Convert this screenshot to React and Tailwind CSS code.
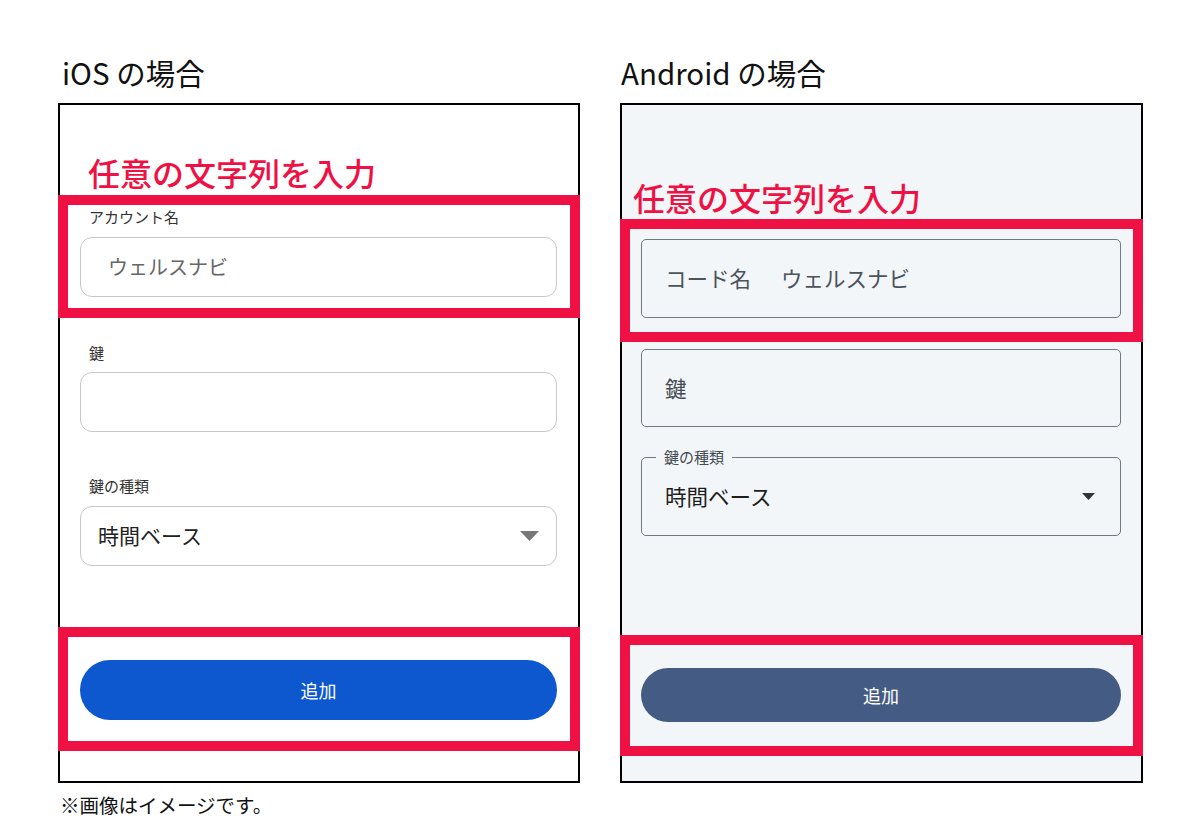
import React from "react";

function Tri({ w, h, color }) {
  return (
    <svg width={w} height={h} viewBox={`0 0 ${w} ${h}`} className="block">
      <polygon points={`0,0 ${w},0 ${w / 2},${h}`} fill={color} />
    </svg>
  );
}

function IOSColumn() {
  return (
    <div className="w-[522px]">
      <div className="h-[40px] leading-[40px] text-[29.5px] pl-[4px] mb-[11px] text-[#111]">iOS の場合</div>
      <div className="h-[680px] border-2 border-black bg-white flex flex-col">
        <div className="pt-[51px] pl-[28px] text-[32px] leading-[32px] font-medium text-[#ef1144]">任意の文字列を入力</div>
        <div className="mt-[7px] -mx-[2px] border-[10px] border-[#ef1144] pt-[3px] pb-[11px] pl-[12px] pr-[13px]">
          <div className="ml-[9px] text-[15px] leading-[18px] text-[#333]">アカウント名</div>
          <div className="mt-[11px] h-[60px] rounded-[12px] border border-[#c8c8c8] flex items-center pl-[27px] text-[20px] text-[#666]">ウェルスナビ</div>
        </div>
        <div className="pl-[20px] pr-[21px] flex flex-col">
          <div className="ml-[9px] mt-[26px] text-[15px] leading-[18px] text-[#333]">鍵</div>
          <div className="mt-[10px] h-[60px] rounded-[12px] border border-[#c8c8c8]"></div>
          <div className="ml-[9px] mt-[45px] text-[15px] leading-[18px] text-[#333]">鍵の種類</div>
          <div className="mt-[11px] h-[60px] rounded-[12px] border border-[#c8c8c8] flex items-center justify-between pl-[17px] pr-[17px]">
            <span className="text-[21px] text-[#222]">時間ベース</span>
            <Tri w={19} h={10} color="#777777" />
          </div>
        </div>
        <div className="mt-[61px] -mx-[2px] border-[10px] border-[#ef1144] pt-[23px] pb-[21px] pl-[12px] pr-[13px]">
          <div className="h-[60px] rounded-full bg-[#0d57cf] flex items-center justify-center text-white text-[18px]">追加</div>
        </div>
      </div>
      <div className="mt-[10px] pl-[2px] text-[19.5px] leading-[24px] text-[#111]">※画像はイメージです。</div>
    </div>
  );
}

function AndroidColumn() {
  return (
    <div className="w-[523px]">
      <div className="h-[40px] leading-[40px] text-[29.5px] pl-[1px] mb-[11px] text-[#111]">Android の場合</div>
      <div className="h-[680px] border-2 border-black bg-[#f3f6f9] flex flex-col">
        <div className="pt-[76px] pl-[11px] text-[32px] leading-[32px] font-medium text-[#ef1144]">任意の文字列を入力</div>
        <div className="mt-[6px] -mx-[2px] border-[10px] border-[#ef1144] pt-[10px] pb-[14px] pl-[11px] pr-[12px]">
          <div className="h-[79px] rounded-[5px] border border-[#6f7a82] flex items-center pl-[23px] text-[21.5px] text-[#4b545c]">
            <span>コード名</span>
            <span className="ml-[30px]">ウェルスナビ</span>
          </div>
        </div>
        <div className="pl-[19px] pr-[20px] flex flex-col">
          <div className="mt-[7px] h-[78px] rounded-[5px] border border-[#6f7a82] flex items-center pl-[23px] text-[21.5px] text-[#444b52]">鍵</div>
          <div className="relative mt-[30px] h-[79px] rounded-[5px] border border-[#6f7a82] flex items-center justify-between pl-[23px] pr-[25px]">
            <span className="absolute -top-[11px] left-[14px] px-[8px] bg-[#f3f6f9] text-[15px] leading-[20px] text-[#444b52]">鍵の種類</span>
            <span className="text-[21.5px] text-[#1e1e1e]">時間ベース</span>
            <Tri w={13} h={7} color="#333333" />
          </div>
        </div>
        <div className="mt-[99px] -mx-[2px] border-[10px] border-[#ef1144] pt-[23px] pb-[24px] pl-[11px] pr-[12px]">
          <div className="h-[54px] rounded-full bg-[#445c84] flex items-center justify-center text-white text-[18px]">追加</div>
        </div>
      </div>
    </div>
  );
}

export default function App() {
  return (
    <div className="w-[1200px] h-[840px] bg-white font-['Noto_Sans_CJK_JP','Noto_Sans',sans-serif]">
      <div className="flex gap-[40px] pl-[58px] pt-[52px]">
        <IOSColumn />
        <AndroidColumn />
      </div>
    </div>
  );
}
